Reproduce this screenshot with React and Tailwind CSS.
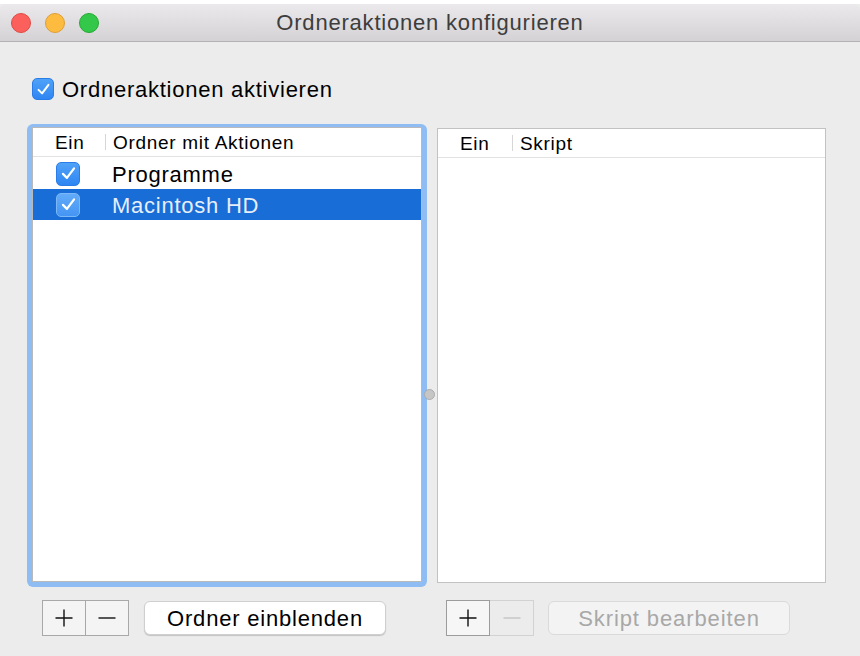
import React from "react";

const font = { fontFamily: '"Liberation Sans", Arial, Helvetica, sans-serif' };

const Check = ({ px = 18 }) => (
  <svg width={px} height={px} viewBox="0 0 24 24" fill="none" stroke="white" strokeWidth="2.8" strokeLinecap="round" strokeLinejoin="round">
    <path d="M5 12.5 L10 17.5 L19 5.5" />
  </svg>
);

const CheckBox = ({ size = "w-[22px] h-[22px]", px = 17, light = false }) => (
  <span
    className={`${size} shrink-0 rounded-[5px] flex items-center justify-center ${
      light
        ? "bg-gradient-to-b from-[#62abf9] to-[#4495f4] border border-[#7ab8f8]"
        : "bg-gradient-to-b from-[#4fa2f8] to-[#2f86f2] border border-[#2a7de6]"
    }`}
  >
    <Check px={px} />
  </span>
);

const Plus = ({ color = "#111" }) => (
  <svg width="20" height="20" viewBox="0 0 20 20">
    <path d="M10 1.5 V18.5 M1.5 10 H18.5" stroke={color} strokeWidth="1.4" />
  </svg>
);

const Minus = ({ color = "#111" }) => (
  <svg width="20" height="20" viewBox="0 0 20 20">
    <path d="M1.5 10 H18.5" stroke={color} strokeWidth="1.4" />
  </svg>
);

export default function App() {
  return (
    <div className="w-[860px] h-[656px] bg-[#ececec] overflow-hidden flex flex-col text-black" style={font}>
      {/* desktop strip behind the window */}
      <div className="h-[4px] bg-white shrink-0" />

      {/* title bar */}
      <div className="h-[38px] shrink-0 grid grid-cols-[1fr_auto_1fr] items-center rounded-t-[6px] bg-gradient-to-b from-[#ebe9eb] to-[#d4d2d4] border-b border-[#b3b1b3]">
        <div className="flex items-center gap-[14px] pl-[11px]">
          <span className="w-[20px] h-[20px] rounded-full bg-[#fc605c] border border-[#df4944]" />
          <span className="w-[20px] h-[20px] rounded-full bg-[#fdbc40] border border-[#de9e35]" />
          <span className="w-[20px] h-[20px] rounded-full bg-[#34c84a] border border-[#26a934]" />
        </div>
        <p className="text-[22px] tracking-[0.8px] text-[#3d3d3d] leading-none pt-[1px]">Ordneraktionen konfigurieren</p>
        <div />
      </div>

      {/* activate checkbox */}
      <div className="h-[22px] shrink-0 flex items-center gap-[8px] pl-[32px] mt-[36px]">
        <CheckBox />
        <span className="text-[22px] tracking-[0.75px] leading-none pt-[2px]">Ordneraktionen aktivieren</span>
      </div>

      {/* tables */}
      <div className="flex items-start pl-[27px] mt-[24px]">
        {/* left column */}
        <div className="w-[400px] flex flex-col">
          <div className="h-[463px] rounded-[6px] bg-[#8fbcf2] p-[5px] pt-[3px]">
            <div className="h-full bg-white border border-[#b9b9b9] flex flex-col">
              <div className="h-[29px] shrink-0 flex items-center border-b border-[#e2e2e2] text-[19px] tracking-[0.7px] leading-none">
                <span className="w-[72px] pl-[22px]">Ein</span>
                <span className="h-[16px] w-px bg-[#d6d6d6]" />
                <span className="pl-[7px]">Ordner mit Aktionen</span>
              </div>
              <div className="h-[32px] shrink-0 flex items-center">
                <span className="w-[79px] pl-[23px] pt-[1px]">
                  <CheckBox size="w-[24px] h-[24px]" px={19} />
                </span>
                <span className="text-[22px] tracking-[0.75px] leading-none pt-[4px]">Programme</span>
              </div>
              <div className="h-[31px] shrink-0 flex items-center bg-[#186dd6]">
                <span className="w-[79px] pl-[23px]">
                  <CheckBox size="w-[24px] h-[24px]" px={19} light />
                </span>
                <span className="text-[22px] tracking-[0.75px] leading-none pt-[3px] text-[#e6eefa]">Macintosh HD</span>
              </div>
            </div>
          </div>
          <div className="flex items-center mt-[13px] pl-[15px] gap-[15px]">
            <div className="flex h-[36px] border border-[#a8a8a8] bg-[#f4f4f4]">
              <span className="w-[43px] flex items-center justify-center border-r border-[#a8a8a8]">
                <Plus />
              </span>
              <span className="w-[42px] flex items-center justify-center">
                <Minus />
              </span>
            </div>
            <button className="w-[242px] h-[34px] bg-white rounded-[6px] border border-[#cfcfcf] shadow-[0_1px_1px_rgba(0,0,0,0.18)] text-[22px] tracking-[0.8px] leading-none pt-[1px]">
              Ordner einblenden
            </button>
          </div>
        </div>

        {/* splitter */}
        <div className="w-[10px] self-stretch flex items-start">
          <span className="mt-[265px] -ml-[3px] w-[11px] h-[11px] rounded-full bg-[#c6c6c6] border border-[#ababab]" />
        </div>

        {/* right column */}
        <div className="w-[389px] flex flex-col mt-[4px]">
          <div className="h-[455px] bg-white border border-[#c2c2c2] flex flex-col">
            <div className="h-[29px] flex items-center border-b border-[#e2e2e2] text-[19px] tracking-[0.7px] leading-none">
              <span className="w-[74px] pl-[22px]">Ein</span>
              <span className="h-[16px] w-px bg-[#d6d6d6]" />
              <span className="pl-[7px]">Skript</span>
            </div>
          </div>
          <div className="flex items-center mt-[17px] pl-[9px] gap-[14px]">
            <div className="flex h-[36px]">
              <span className="w-[44px] flex items-center justify-center border border-[#9c9c9c] bg-[#f6f6f6]">
                <Plus />
              </span>
              <span className="w-[44px] flex items-center justify-center border border-l-0 border-[#d2d2d2] bg-[#ececec]">
                <Minus color="#c4c4c4" />
              </span>
            </div>
            <button className="w-[242px] h-[34px] bg-[#f3f3f3] rounded-[6px] border border-[#dadada] text-[22px] tracking-[0.9px] leading-none pt-[1px] text-[#a8a8a8]">
              Skript bearbeiten
            </button>
          </div>
        </div>
      </div>
    </div>
  );
}
